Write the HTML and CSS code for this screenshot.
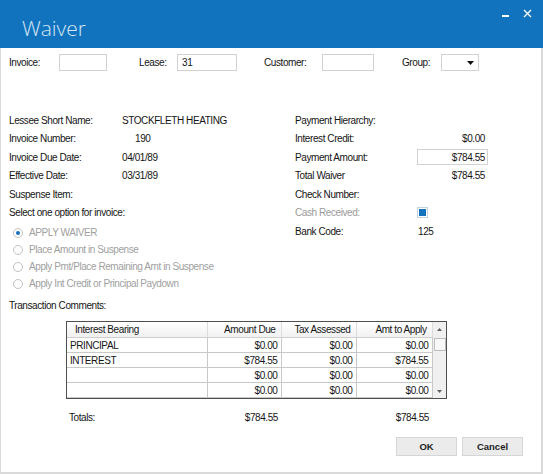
FILE: index.html
```html
<!DOCTYPE html>
<html lang="en">
<head>
    <meta charset="UTF-8">
    <title>Waiver</title>
    <link rel="stylesheet" href="styles.css">
</head>
<body>
    <div class="window">
        <header class="titlebar">
            <h1 class="title">Waiver</h1>
            <div class="win-controls">
                <span class="minimize"></span>
                <svg class="close" width="9" height="9" viewBox="0 0 9 9">
                    <path d="M1 1L8 8M8 1L1 8" stroke="#ffffff" stroke-width="1.3"/>
                </svg>
            </div>
        </header>

        <main class="content">
            <div class="search-row">
                <label class="search-label lbl-invoice">Invoice:</label>
                <input type="text" class="field w-invoice">
                <label class="search-label lbl-lease">Lease:</label>
                <input type="text" class="field w-lease" value="31">
                <label class="search-label lbl-customer">Customer:</label>
                <input type="text" class="field w-customer">
                <label class="search-label lbl-group">Group:</label>
                <div class="field select-box">
                    <svg width="7" height="4" viewBox="0 0 7 4"><path d="M0 0H7L3.5 4Z" fill="#111"/></svg>
                </div>
            </div>

            <div class="details">
                <div class="col-left">
                    <div class="row"><span class="key">Lessee Short Name:</span><span class="val">STOCKFLETH HEATING</span></div>
                    <div class="row"><span class="key">Invoice Number:</span><span class="val indent">190</span></div>
                    <div class="row"><span class="key">Invoice Due Date:</span><span class="val">04/01/89</span></div>
                    <div class="row"><span class="key">Effective Date:</span><span class="val">03/31/89</span></div>
                    <div class="row"><span class="key">Suspense Item:</span></div>
                    <div class="row"><span class="key wide">Select one option for invoice:</span></div>

                    <div class="radio-group">
                        <div class="radio-row"><span class="radio checked"></span>APPLY WAIVER</div>
                        <div class="radio-row"><span class="radio"></span>Place Amount in Suspense</div>
                        <div class="radio-row"><span class="radio"></span>Apply Pmt/Place Remaining Amt in Suspense</div>
                        <div class="radio-row"><span class="radio"></span>Apply Int Credit or Principal Paydown</div>
                    </div>

                    <div class="row comments"><span class="key wide">Transaction Comments:</span></div>
                </div>

                <div class="col-right">
                    <div class="row"><span class="key">Payment Hierarchy:</span></div>
                    <div class="row"><span class="key">Interest Credit:</span><span class="val money">$0.00</span></div>
                    <div class="row"><span class="key">Payment Amount:</span><input type="text" class="field amount-input" value="$784.55"></div>
                    <div class="row"><span class="key">Total Waiver</span><span class="val money">$784.55</span></div>
                    <div class="row"><span class="key">Check Number:</span></div>
                    <div class="row"><span class="key muted">Cash Received:</span><span class="checkbox"><span class="check-fill"></span></span></div>
                    <div class="row"><span class="key">Bank Code:</span><span class="val code">125</span></div>
                </div>
            </div>

            <div class="grid-wrap">
                <table class="grid">
                    <thead>
                        <tr>
                            <th class="c-name">Interest Bearing</th>
                            <th class="c-num">Amount Due</th>
                            <th class="c-num">Tax Assessed</th>
                            <th class="c-num">Amt to Apply</th>
                        </tr>
                    </thead>
                    <tbody>
                        <tr><td>PRINCIPAL</td><td class="num">$0.00</td><td class="num">$0.00</td><td class="num">$0.00</td></tr>
                        <tr><td>INTEREST</td><td class="num">$784.55</td><td class="num">$0.00</td><td class="num">$784.55</td></tr>
                        <tr><td></td><td class="num">$0.00</td><td class="num">$0.00</td><td class="num">$0.00</td></tr>
                        <tr><td></td><td class="num">$0.00</td><td class="num">$0.00</td><td class="num">$0.00</td></tr>
                    </tbody>
                </table>
                <div class="scrollbar">
                    <svg class="arrow" width="5" height="3" viewBox="0 0 5 3"><path d="M0 3H5L2.5 0Z" fill="#606060"/></svg>
                    <div class="thumb"></div>
                    <svg class="arrow down" width="5" height="3" viewBox="0 0 5 3"><path d="M0 0H5L2.5 3Z" fill="#606060"/></svg>
                </div>
            </div>

            <div class="totals">
                <span class="totals-label">Totals:</span>
                <span class="num">$784.55</span>
                <span></span>
                <span class="num">$784.55</span>
            </div>

            <div class="buttons">
                <button class="btn">OK</button>
                <button class="btn">Cancel</button>
            </div>
        </main>
    </div>
</body>
</html>
```

FILE: styles.css
```css
* {
    box-sizing: border-box;
}

body {
    margin: 0;
    background: #fff;
    font-family: "Liberation Sans", Arial, sans-serif;
    font-size: 10px;
    letter-spacing: -0.42px;
    color: #151515;
}

.window {
    width: 543px;
    height: 474px;
    display: flex;
    flex-direction: column;
}

/* title bar */
.titlebar {
    height: 48px;
    flex-shrink: 0;
    background: #1173be;
    display: flex;
    justify-content: space-between;
    align-items: flex-start;
}

.title {
    margin: 0;
    padding: 14px 0 0 22px;
    font-family: "Open Sans", sans-serif;
    font-weight: 300;
    font-size: 21px;
    line-height: 28px;
    letter-spacing: 0;
    color: #d3e6f5;
}

.win-controls {
    display: flex;
    align-items: flex-start;
    gap: 14px;
    padding: 9px 11px 0 0;
}

.minimize {
    width: 7px;
    height: 2px;
    margin-top: 6px;
    background: #fff;
}

/* body */
.content {
    flex: 1;
    border: solid #dadada;
    border-width: 0 2px 2px 1px;
    padding: 6px 18px 0 8px;
}

.field {
    height: 17px;
    border: 1px solid #d2d2d2;
    background: #fff;
    font-family: inherit;
    font-size: inherit;
    letter-spacing: inherit;
    color: inherit;
    padding: 0 4px;
    outline: none;
}

.search-row {
    display: flex;
    align-items: center;
    height: 17px;
}

.search-label {
    flex-shrink: 0;
}

.lbl-invoice { width: 50px; }
.w-invoice { width: 48px; }
.lbl-lease { width: 38px; margin-left: 32px; }
.w-lease { width: 60px; }
.lbl-customer { width: 58px; margin-left: 27px; }
.w-customer { width: 52px; }
.lbl-group { width: 39px; margin-left: 28px; }

.select-box {
    width: 38px;
    display: flex;
    align-items: center;
    justify-content: flex-end;
    padding-right: 4px;
}

.details {
    display: grid;
    grid-template-columns: 286px 1fr;
    margin-top: 40px;
}

.row {
    height: 18.5px;
    display: flex;
    align-items: center;
}

.col-left .key {
    width: 113px;
    flex-shrink: 0;
}

.col-right .key {
    width: 122px;
    flex-shrink: 0;
}

.key.wide {
    width: auto;
}

.muted {
    color: #9a9a9a;
}

.indent {
    padding-left: 13px;
}

.val.money {
    width: 71px;
    text-align: right;
    padding-right: 3px;
}

.val.code {
    padding-left: 1px;
}

.amount-input {
    width: 71px;
    height: 16px;
    text-align: right;
    padding-right: 2px;
}

.checkbox {
    width: 11px;
    height: 11px;
    border: 1px solid #c4d3e0;
    padding: 1px;
    background: #fff;
}

.check-fill {
    display: block;
    width: 100%;
    height: 100%;
    background: #1173be;
}

.radio-group {
    margin-top: 2px;
}

.radio-row {
    height: 17px;
    display: flex;
    align-items: center;
    gap: 6px;
    padding-left: 4px;
    color: #a0a0a0;
}

.radio {
    width: 10px;
    height: 10px;
    border: 1px solid #c2c2c2;
    border-radius: 50%;
    background: #fff;
    display: flex;
    align-items: center;
    justify-content: center;
}

.radio.checked::after {
    content: "";
    width: 4px;
    height: 4px;
    border-radius: 50%;
    background: #1a70c0;
}

.comments {
    margin-top: 4px;
}

/* grid */
.grid-wrap {
    display: flex;
    width: 381px;
    height: 78px;
    margin: 6px 0 0 57px;
    border: 1px solid #4f4f4f;
    overflow: hidden;
}

.grid {
    width: 365px;
    border-collapse: collapse;
    table-layout: fixed;
    flex-shrink: 0;
}

.grid th {
    height: 16px;
    padding: 0 5px 0 0;
    font-weight: normal;
    text-align: right;
    background: linear-gradient(#ffffff, #f1f1f1);
    border-right: 1px solid #dcdcdc;
    border-bottom: 1px solid #cfcfcf;
    white-space: nowrap;
}

.grid th.c-name {
    width: 140px;
    text-align: left;
    padding-left: 8px;
}

.grid th:nth-child(2) { width: 74px; }
.grid th:nth-child(3) { width: 75px; }
.grid th:nth-child(4) { width: 76px; }

.grid td {
    height: 15px;
    padding: 0 3px;
    border-right: 1px solid #c8c8c8;
    border-bottom: 1px solid #c8c8c8;
    white-space: nowrap;
}

.num {
    text-align: right;
}

.scrollbar {
    width: 14px;
    flex-shrink: 0;
    background: #f0f0f0;
    display: flex;
    flex-direction: column;
    align-items: center;
}

.scrollbar .arrow {
    margin-top: 6px;
}

.scrollbar .thumb {
    width: 12px;
    height: 13px;
    margin-top: 7px;
    background: #f8f8f8;
    border: 1px solid #bdbdbd;
}

.scrollbar .arrow.down {
    margin-top: auto;
    margin-bottom: 5px;
}

/* totals and buttons */
.totals {
    display: grid;
    grid-template-columns: 140px 74px 75px 76px;
    height: 16px;
    align-items: center;
    margin: 11px 0 0 58px;
}

.totals .num {
    padding-right: 3px;
}

.totals-label {
    padding-left: 2px;
}

.buttons {
    display: flex;
    justify-content: flex-end;
    gap: 5px;
    margin-top: 11px;
}

.btn {
    width: 61px;
    height: 19px;
    padding: 0;
    border: 1px solid #d6d6d6;
    background: #ebebeb;
    font-family: inherit;
    font-size: 9.5px;
    font-weight: bold;
    letter-spacing: 0;
    color: #1e1e1e;
}
```
